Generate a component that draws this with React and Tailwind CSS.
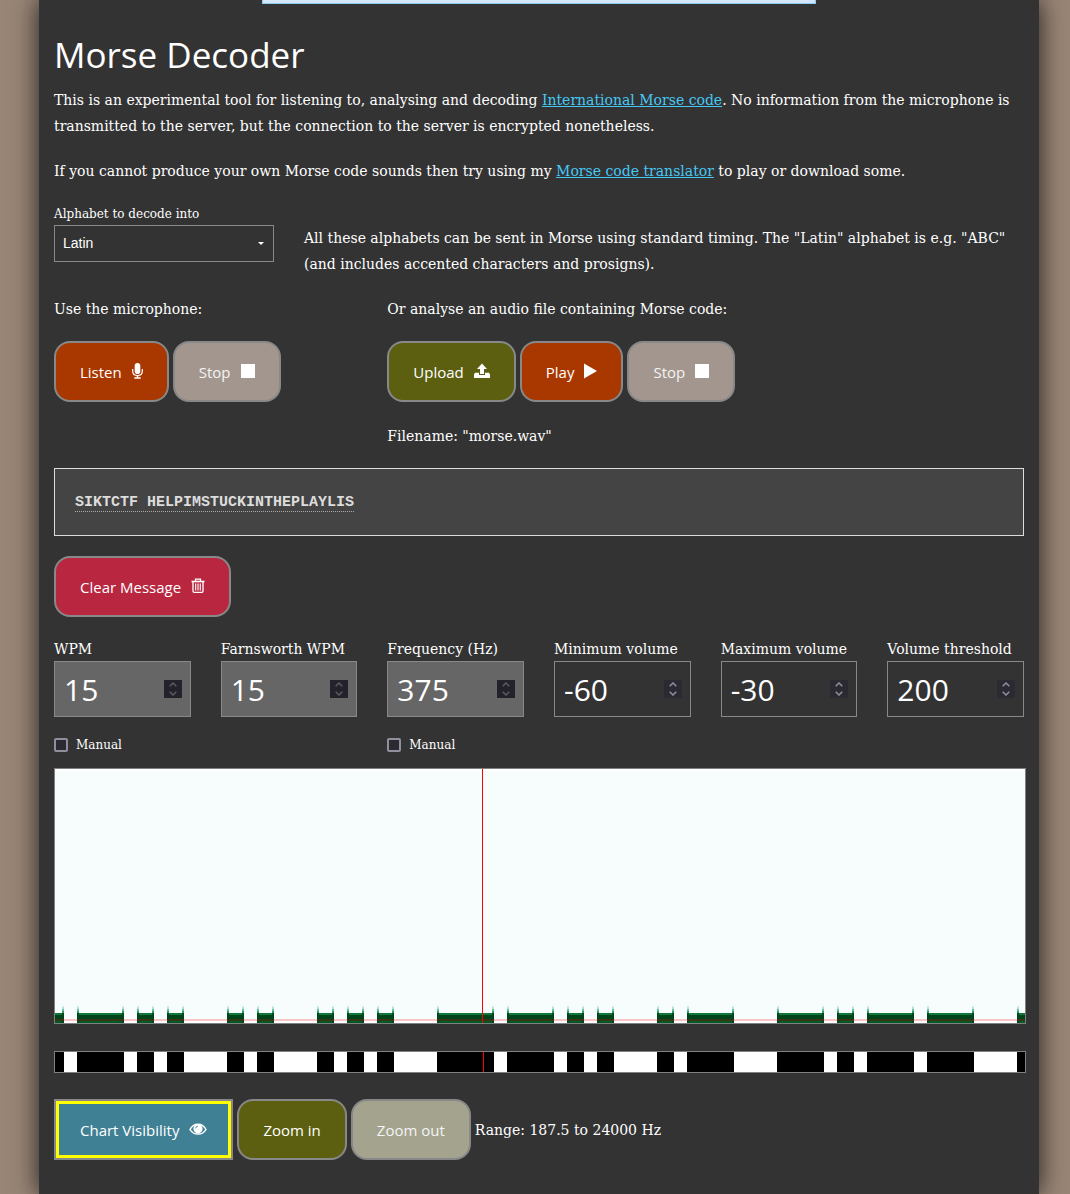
import React, { useState } from "react";

const SERIF = "font-['DejaVu_Serif',serif]";
const SANS = "font-['Open_Sans',sans-serif]";

function MicIcon() {
  return (
    <svg width="11" height="16" viewBox="0 0 11 16" fill="none" aria-hidden="true">
      <rect x="2.700" y="0" width="5.600" height="11" rx="2.800" fill="currentColor" />
      <path d="M0.700 6v2.200c0 2.600 2 4.300 4.800 4.300s4.800-1.700 4.800-4.300V6" stroke="currentColor" strokeWidth="1.200" />
      <path d="M5.500 12.500v2M2.300 15h6.400" stroke="currentColor" strokeWidth="1.500" />
    </svg>
  );
}

function StopIcon() {
  return (
    <svg width="14" height="16" viewBox="0 0 14 16" fill="#fff" aria-hidden="true">
      <rect x="0" y="1" width="14" height="14" />
    </svg>
  );
}

function PlayIcon() {
  return (
    <svg width="13" height="16" viewBox="0 0 13 16" fill="currentColor" aria-hidden="true">
      <path d="M0 0.600L13 8L0 15.400Z" />
    </svg>
  );
}

function UploadIcon() {
  return (
    <svg width="16" height="16" viewBox="0 0 16 16" fill="currentColor" aria-hidden="true">
      <path d="M8 0.500L13 6H10V11H6V6H3Z" />
      <path d="M1 9.800H5V12H11V9.800H15L16 11.500V15H0V11.500Z" />
    </svg>
  );
}

function TrashIcon() {
  return (
    <svg width="14" height="16" viewBox="0 0 14 16" fill="none" stroke="currentColor" aria-hidden="true">
      <path d="M0.500 3.500H13.500" strokeWidth="1.600" />
      <path d="M4.500 3V1.200H9.500V3" strokeWidth="1.200" />
      <path d="M2 4V13.300Q2 14.400 3.100 14.400H10.900Q12 14.400 12 13.300V4" strokeWidth="1.300" />
      <path d="M4.700 5.500V12.500M7 5.500V12.500M9.300 5.500V12.500" strokeWidth="1.100" />
    </svg>
  );
}

function EyeIcon() {
  return (
    <svg width="18" height="16" viewBox="0 0 18 16" fill="none" aria-hidden="true">
      <path d="M1 8.500C4.500 1.500 13.500 1.500 17 8.500C13.500 14.600 4.500 14.600 1 8.500Z" stroke="currentColor" strokeWidth="1.500" />
      <circle cx="9" cy="7.800" r="4.600" fill="currentColor" />
      <path d="M6.700 7.300A2.400 2.400 0 0 1 9 5.200" stroke="#408095" strokeWidth="0.900" />
    </svg>
  );
}

function Button({ children, icon, tone, shape = "rounded-2xl", muted }) {
  return (
    <button
      type="button"
      className={`${SANS} inline-flex h-[61px] items-center gap-2.5 border-2 border-[#888] px-6 text-[15px] leading-6 whitespace-nowrap ${muted ? "text-[#f4f4f4]" : "text-white"} ${shape} ${tone}`}
    >
      <span>{children}</span>
      {icon && <span className="-mt-0.5">{icon}</span>}
    </button>
  );
}

function NumberField({ id, label, initial, disabled, manual }) {
  const [value, setValue] = useState(initial);
  const step = (d) => setValue((v) => Number(v) + d);
  const box = disabled ? "bg-[#666]" : "bg-[#333]";
  const spin = disabled ? "bg-[#23222b] text-[#5b5a63]" : "bg-[#2b2a33] text-[#8f8f9d]";
  return (
    <div className="min-w-0">
      <label htmlFor={id} className="block text-[14px] leading-6 whitespace-nowrap">
        {label}
      </label>
      <div className={`flex h-14 items-center border border-[#888] pr-2 ${box}`}>
        <input
          id={id}
          type="number"
          value={value}
          disabled={disabled}
          onChange={(e) => setValue(e.target.value)}
          className={`${SANS} w-full min-w-0 flex-1 bg-transparent pt-0.5 pl-[9px] text-[30px] leading-10 text-white outline-none [appearance:textfield] [&::-webkit-inner-spin-button]:appearance-none`}
        />
        <div className={`flex h-[18px] w-[18px] flex-col items-center justify-center gap-1 ${spin}`}>
          <button type="button" aria-label={`Increase ${label}`} disabled={disabled} onClick={() => step(1)}>
            <svg className="block" width="8" height="5" viewBox="0 0 8 5" fill="none" stroke="currentColor" strokeWidth="1.500">
              <path d="M0.700 4.300L4 1L7.300 4.300" />
            </svg>
          </button>
          <button type="button" aria-label={`Decrease ${label}`} disabled={disabled} onClick={() => step(-1)}>
            <svg className="block" width="8" height="5" viewBox="0 0 8 5" fill="none" stroke="currentColor" strokeWidth="1.500">
              <path d="M0.700 0.700L4 4L7.300 0.700" />
            </svg>
          </button>
        </div>
      </div>
      {manual && (
        <label className="mt-[17px] flex items-center gap-2 text-[12px] leading-[22px]">
          <input
            type="checkbox"
            className="h-3.5 w-3.5 appearance-none rounded-[2px] border-2 border-[#8f8f9d] bg-[#2b2a33] checked:bg-[#00ddff]"
          />
          Manual
        </label>
      )}
    </div>
  );
}

// [start, end] of each tone along the 970-unit time axis
const TONES = [
  [0, 9], [22, 69], [82, 99], [112, 129], [172, 189], [202, 219], [262, 279],
  [292, 309], [322, 339], [382, 439], [452, 499], [512, 529], [542, 559],
  [602, 619], [632, 679], [722, 769], [782, 799], [812, 859], [872, 919], [962, 970],
];

function Edge({ x }) {
  return (
    <g>
      <rect x={x} y="236" width="2" height="2" fill="#e5f5f5" />
      <rect x={x} y="238" width="2" height="2" fill="#b9e3d8" />
      <rect x={x} y="240" width="2" height="2" fill="#66c2a4" />
      <rect x={x} y="242" width="2" height="2" fill="#2f9a61" />
      <rect x={x} y="244" width="2" height="10" fill="#00441b" />
    </g>
  );
}

function Spectrogram() {
  return (
    <svg
      className="block h-[256px] w-full border border-[#808080] bg-[#f7fcfd]"
      viewBox="0 0 970 254"
      preserveAspectRatio="none"
      shapeRendering="crispEdges"
      role="img"
      aria-label="Spectrogram"
    >
      <rect x="0" y="0" width="970" height="2" fill="#fff" />
      <rect x="0" y="252" width="970" height="2" fill="#fff" />
      {TONES.map(([a, b]) => (
        <g key={a}>
          <rect x={a} y="244" width={b - a} height="10" fill="#00441b" />
          <rect x={a} y="244" width={b - a} height="2" fill="#10783a" />
          <rect x={a} y="252" width={b - a} height="2" fill="#005a25" />
          {a > 0 && <Edge x={a} />}
          {b < 970 && <Edge x={b - 2} />}
        </g>
      ))}
      <rect x="0" y="250" width="970" height="2" fill="#ff0000" fillOpacity="0.22" />
      <rect x="427" y="0" width="1" height="254" fill="#ff0000" />
    </svg>
  );
}

function Timeline() {
  return (
    <svg
      className="block h-[22px] w-full border border-[#808080] bg-white"
      viewBox="0 0 970 20"
      preserveAspectRatio="none"
      shapeRendering="crispEdges"
      role="img"
      aria-label="Tone timeline"
    >
      {TONES.map(([a, b]) => (
        <rect key={a} x={a} y="0" width={b - a} height="20" fill="#000" />
      ))}
      <rect x="428" y="0" width="1" height="20" fill="#ff0000" />
    </svg>
  );
}

export default function App() {
  return (
    <div className={`${SERIF} min-h-screen overflow-hidden bg-[#988576] pr-[31px] pl-[39px] text-[14px] leading-[26px] text-white`}>
      <main className="mx-auto min-h-screen max-w-[1000px] bg-[#333] px-[15px] pb-[34px] shadow-[0_0_24px_rgba(0,0,0,0.8)]">
        <div className="mx-auto h-1 max-w-[554px] border-x border-b border-[#8ecbf0] bg-[#d4e8fa]" />
        <h1 className={`${SANS} mt-7 text-[35px] leading-[46px]`}>Morse Decoder</h1>
        <p className="mt-[9px]">
          This is an experimental tool for listening to, analysing and decoding{" "}
          <a href="#international" className="text-[#46c8f5] underline">International Morse code</a>. No information from the microphone is
          transmitted to the server, but the connection to the server is encrypted nonetheless.
        </p>
        <p className="mt-[19px]">
          If you cannot produce your own Morse code sounds then try using my{" "}
          <a href="#translator" className="text-[#46c8f5] underline">Morse code translator</a> to play or download some.
        </p>

        <div className="mt-[19px] grid grid-cols-4 gap-x-[30px]">
          <div>
            <label htmlFor="alphabet" className="block text-[12px] leading-[22px]">Alphabet to decode into</label>
            <div className="relative">
              <select
                id="alphabet"
                className="block h-[37px] w-full appearance-none border border-[#888] bg-[#333] px-2 pb-0.5 font-['Liberation_Sans',sans-serif] text-[14px] text-white"
              >
                <option>Latin</option>
              </select>
              <svg className="pointer-events-none absolute top-[17px] right-2.5" width="6" height="3" viewBox="0 0 6 3" fill="#fff" aria-hidden="true">
                <path d="M0 0H6L3 3Z" />
              </svg>
            </div>
          </div>
          <p className="col-span-3 mt-[22px]">
            All these alphabets can be sent in Morse using standard timing. The "Latin" alphabet is e.g. "ABC" (and includes accented characters and prosigns).
          </p>
        </div>

        <div className="mt-[19px] grid grid-cols-3 gap-x-[30px]">
          <section>
            <p>Use the microphone:</p>
            <div className="mt-[19px] flex gap-1">
              <Button tone="bg-[#a93700]" icon={<MicIcon />}>Listen</Button>
              <Button tone="bg-[#a3968e]" icon={<StopIcon />} muted>Stop</Button>
            </div>
          </section>
          <section className="col-span-2">
            <p>Or analyse an audio file containing Morse code:</p>
            <div className="mt-[19px] flex gap-1">
              <Button tone="bg-[#5c5f10]" icon={<UploadIcon />}>Upload</Button>
              <Button tone="bg-[#a93700]" icon={<PlayIcon />}>Play</Button>
              <Button tone="bg-[#a3968e]" icon={<StopIcon />} muted>Stop</Button>
            </div>
            <p className="mt-[21px]">Filename: "morse.wav"</p>
          </section>
        </div>

        <div className="mt-[19px] flex h-[68px] items-center border border-[#ddd] bg-[#444] px-5 pt-0.5 font-['Liberation_Mono',monospace] text-[15px] leading-5 font-bold text-[#ddd]">
          <span className="border-b border-dotted border-[#aaa] leading-[17px]">SIKTCTF HELPIMSTUCKINTHEPLAYLIS</span>
        </div>

        <div className="mt-5 flex">
          <Button tone="bg-[#b9263f]" icon={<TrashIcon />}>Clear Message</Button>
        </div>

        <div className="mt-5 grid grid-cols-6 gap-x-[30px]">
          <NumberField id="wpm" label="WPM" initial={15} disabled manual />
          <NumberField id="fwpm" label="Farnsworth WPM" initial={15} disabled />
          <NumberField id="freq" label="Frequency (Hz)" initial={375} disabled manual />
          <NumberField id="minvol" label="Minimum volume" initial={-60} />
          <NumberField id="maxvol" label="Maximum volume" initial={-30} />
          <NumberField id="threshold" label="Volume threshold" initial={200} />
        </div>

        <div className="-mr-0.5 mt-3">
          <Spectrogram />
        </div>
        <div className="-mr-0.5 mt-[27px]">
          <Timeline />
        </div>

        <div className="mt-[26px] flex items-center gap-1">
          <Button tone="bg-[#408095] outline-3 -outline-offset-5 outline-[#ff0]" shape="rounded-none" icon={<EyeIcon />}>
            Chart Visibility
          </Button>
          <Button tone="bg-[#5c5f10]">Zoom in</Button>
          <Button tone="bg-[#a3a38e]" muted>Zoom out</Button>
          <span>Range: 187.5 to 24000 Hz</span>
        </div>
      </main>
    </div>
  );
}
